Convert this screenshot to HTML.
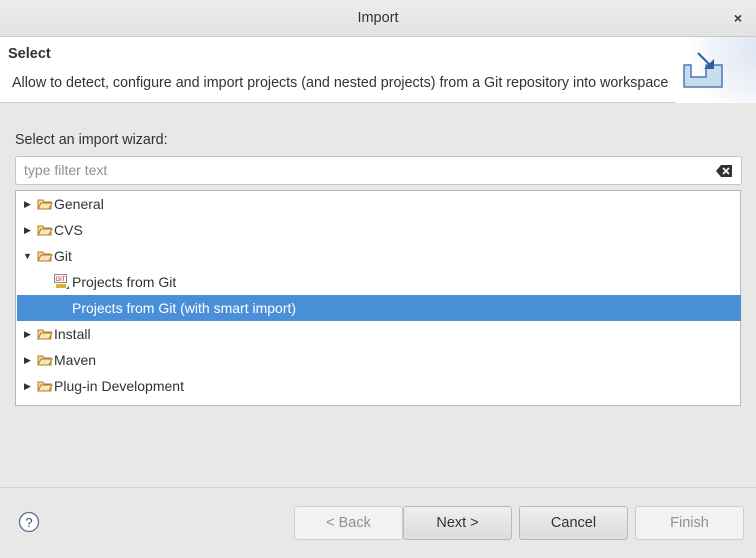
<!DOCTYPE html>
<html><head><style>
*{box-sizing:border-box;margin:0;padding:0}
body{width:756px;height:558px;background:#e8e8e7;font-family:"Liberation Sans",sans-serif;font-size:14px;color:#2e3436;position:relative;overflow:hidden}
.abs{position:absolute}
.title{left:0;top:0;width:756px;height:37px;background:linear-gradient(#ededec,#e3e3e2);border-bottom:1px solid #c8c8c6;text-align:center;line-height:36px;font-size:14.5px}
.hdr{left:0;top:37px;width:756px;height:66px;background:#fff;border-bottom:1px solid #d0d0ce}
.row{position:absolute;left:1px;width:724px;height:26px;line-height:26px}
.btn{position:absolute;top:506px;height:34px;width:109px;border:1px solid #b9b9b7;border-radius:3px;background:linear-gradient(#efefee,#dcdcda);text-align:center;line-height:32px;font-size:14.5px}
.dis{background:#f2f2f1;color:#8f9192;border-color:#cfcfcd}
.fold{position:absolute;top:7px}
</style></head><body>
<div class="abs title">Import<span class="abs" style="right:14px;top:0;font-weight:bold;font-size:14px">×</span></div>
<div class="abs hdr">
<div class="abs" style="right:0;top:0;width:80px;height:66px;background:radial-gradient(circle at 100% 20%,#dfe6f3 0,#eef2f9 40%,#fff 70%)"></div>
<div class="abs" style="left:8px;top:9px;font-weight:bold;font-size:14.5px">Select</div>
<div class="abs" style="left:12px;top:38px;white-space:nowrap;font-size:14.3px">Allow to detect, configure and import projects (and nested projects) from a Git repository into workspace</div>
<svg class="abs" style="left:682px;top:14px" width="60" height="40"><path d="M2 14h7v12h15v-12h16v22h-38z" fill="#c8dcf0" stroke="#4b78b2" stroke-width="1.5"/><path d="M16 2l14 14" stroke="#2f5d97" stroke-width="2"/><path d="M32 8v10h-10z" fill="#2f5d97"/></svg>
</div>
<div class="abs" style="left:15px;top:132px;font-size:14.3px">Select an import wizard:</div>
<div class="abs" style="left:15px;top:156px;width:727px;height:29px;background:#fff;border:1px solid #c5c5c3;border-radius:3px;line-height:27px;padding-left:8px;color:#8d8f90">type filter text
<svg class="abs" style="right:9px;top:8px" width="16" height="12"><path d="M0 6l5-6h11v12h-11z" fill="#2e3436"/><path d="M7 3l6 6M13 3l-6 6" stroke="#fff" stroke-width="1.6"/></svg></div>
<div class="abs" style="left:15px;top:190px;width:726px;height:216px;background:#fff;border:1px solid #b9b9b7">
<div class="row" style="top:0"><span class="abs" style="left:7px;top:0;font-size:9px">▶</span><svg class="fold" style="left:20px" width="16" height="12"><path d="M1 2h5l1 2h7v7h-13z" fill="#f5d9a0" stroke="#b07d2a"/><path d="M1 11l3-6h11l-3 6z" fill="#fbe5b4" stroke="#b07d2a"/></svg><span class="abs" style="left:37px">General</span></div>
<div class="row" style="top:26px"><span class="abs" style="left:7px;font-size:9px">▶</span><svg class="fold" style="left:20px" width="16" height="12"><path d="M1 2h5l1 2h7v7h-13z" fill="#f5d9a0" stroke="#b07d2a"/><path d="M1 11l3-6h11l-3 6z" fill="#fbe5b4" stroke="#b07d2a"/></svg><span class="abs" style="left:37px">CVS</span></div>
<div class="row" style="top:52px"><span class="abs" style="left:6px;font-size:9px">▼</span><svg class="fold" style="left:20px" width="16" height="12"><path d="M1 2h5l1 2h7v7h-13z" fill="#f5d9a0" stroke="#b07d2a"/><path d="M1 11l3-6h11l-3 6z" fill="#fbe5b4" stroke="#b07d2a"/></svg><span class="abs" style="left:37px">Git</span></div>
<div class="row" style="top:78px"><svg class="abs" style="left:37px;top:5px" width="16" height="16"><rect x="0.5" y="0.5" width="12" height="8" fill="#fff" stroke="#888"/><text x="1.5" y="7" font-size="6" fill="#c00" font-family="Liberation Sans">GIT</text><rect x="2" y="10" width="10" height="4" fill="#e0b030"/><path d="M12 15l3-3v3z" fill="#3060c0"/></svg><span class="abs" style="left:55px">Projects from Git</span></div>
<div class="row" style="top:104px;background:#4a90d9;color:#fff;width:724px"><span class="abs" style="left:55px">Projects from Git (with smart import)</span></div>
<div class="row" style="top:130px"><span class="abs" style="left:7px;font-size:9px">▶</span><svg class="fold" style="left:20px" width="16" height="12"><path d="M1 2h5l1 2h7v7h-13z" fill="#f5d9a0" stroke="#b07d2a"/><path d="M1 11l3-6h11l-3 6z" fill="#fbe5b4" stroke="#b07d2a"/></svg><span class="abs" style="left:37px">Install</span></div>
<div class="row" style="top:156px"><span class="abs" style="left:7px;font-size:9px">▶</span><svg class="fold" style="left:20px" width="16" height="12"><path d="M1 2h5l1 2h7v7h-13z" fill="#f5d9a0" stroke="#b07d2a"/><path d="M1 11l3-6h11l-3 6z" fill="#fbe5b4" stroke="#b07d2a"/></svg><span class="abs" style="left:37px">Maven</span></div>
<div class="row" style="top:182px"><span class="abs" style="left:7px;font-size:9px">▶</span><svg class="fold" style="left:20px" width="16" height="12"><path d="M1 2h5l1 2h7v7h-13z" fill="#f5d9a0" stroke="#b07d2a"/><path d="M1 11l3-6h11l-3 6z" fill="#fbe5b4" stroke="#b07d2a"/></svg><span class="abs" style="left:37px">Plug-in Development</span></div>
</div>
<div class="abs" style="left:0;top:487px;width:756px;height:1px;background:#d3d3d1"></div>
<svg class="abs" style="left:18px;top:511px" width="22" height="22"><circle cx="11" cy="11" r="9.5" fill="#fff" stroke="#5a6f96" stroke-width="1.3"/><text x="11" y="16" text-anchor="middle" font-size="13" fill="#3b4a6b" font-family="Liberation Sans">?</text></svg>
<div class="btn dis" style="left:294px">&lt; Back</div>
<div class="btn" style="left:403px">Next &gt;</div>
<div class="btn" style="left:519px">Cancel</div>
<div class="btn dis" style="left:635px">Finish</div>
</body></html>
